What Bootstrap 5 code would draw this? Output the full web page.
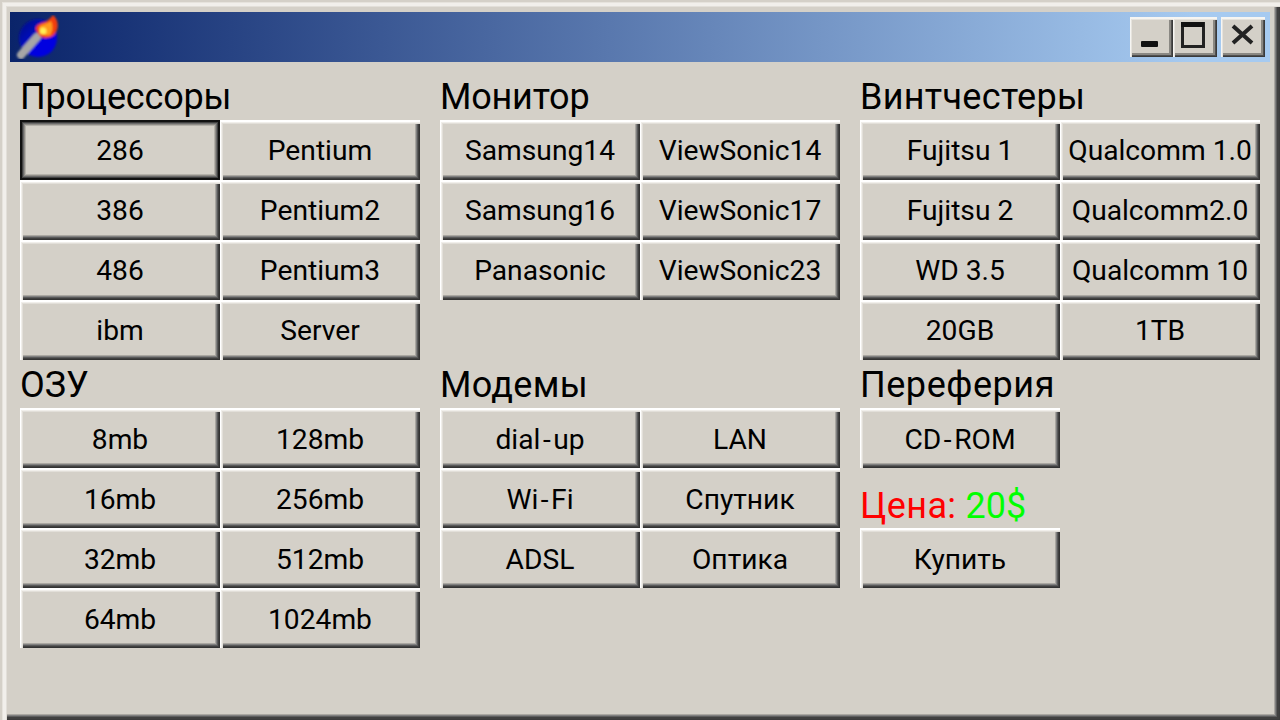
<!DOCTYPE html>
<html lang="ru">
<head>
<meta charset="utf-8">
<title>Конфигуратор</title>
<link href="https://cdn.jsdelivr.net/npm/bootstrap@5.3.0/dist/css/bootstrap.min.css" rel="stylesheet">
<style>
html,body{margin:0;height:100%;overflow:hidden;background:#d4d0c8}
.win{width:1280px;height:720px;background:#d4d0c8;font-family:Roboto,"Liberation Sans",sans-serif;color:#000;
  box-shadow:inset 2px 2px 0 #d4d0c8,inset 3px 3px 0 #e6e3dd,inset 6px 6px 0 #f1efeb,inset 7px 7px 0 #e2dfd9,
    inset -1px -1px 0 #3c3c3c,inset -3px -3px 0 #404040,inset -4px -4px 0 #5e5e5e,inset -5px -5px 0 #808080,inset -6px -6px 0 #aaa7a1;
  padding:12px 10px 0 10px}
.tbar{height:50px;background:linear-gradient(90deg,#0a246a,#a6caf0 94%);padding:0 5px 0 5px}
.wbtn{height:40px;background:#d4d0c8;box-shadow:inset 1px 2px 0 #f6f5f2,inset 2px 3px 0 #e6e3dd,inset -1px -1px 0 #3a3a3a,inset -2px -2px 0 #505050,inset -4px -4px 0 #8a8883}
.wbtn.w43{width:43px}.wbtn.w44{width:44px}
.wbtn svg{display:block}
.cols{padding:10px 0 0 10px;gap:20px}
.pane{width:400px}
.ttl{font-size:36px;line-height:50px;height:48px;white-space:nowrap}
.tight{letter-spacing:-.2px}.loose{letter-spacing:.3px}.looser{letter-spacing:.55px}
.keys{grid-template-columns:200px 200px}
.keys3{height:240px}
.key{width:200px;height:60px;padding:2px 0 0;border:0;border-radius:0;background:#d4d0c8;color:#000;font:400 28.2px/1.2 Roboto,"Liberation Sans",sans-serif;white-space:nowrap;
  box-shadow:inset 1px 2px 0 #fff,inset 2px 3px 0 #f1efeb,inset 3px 4px 0 #e2dfd9,
    inset -1px -1px 0 #333,inset -2px -2px 0 #404040,inset -3px -3px 0 #5a5a5a,inset -4px -4px 0 #808080,inset -5px -5px 0 #aaa7a1}
.key:hover{background:#d4d0c8;color:#000}
.key.act{box-shadow:inset 0 0 0 2px #111,inset 0 0 0 3px #404040,inset 0 0 0 4px #6a6a6a,inset 0 0 0 5px #8f8c87,inset 0 0 0 6px #b4b1aa}
.low .key,.key.low{padding-top:4px}
.hy{padding:0 2.500px}
.price{height:60px;line-height:76px;font-size:36px;white-space:nowrap}
.red{color:#f00;letter-spacing:.4px}.lime{color:#0f0}
</style>
</head>
<body>
<div class="win">
  <div class="tbar d-flex align-items-center justify-content-between">
    <svg width="44" height="44" viewBox="0 0 44 44" aria-hidden="true">
      <defs>
        <filter id="b"><feGaussianBlur stdDeviation=".9"/></filter>
        <linearGradient id="d" x1="0" y1="0" x2="1" y2="1"><stop offset=".1" stop-color="#04128c"/><stop offset=".6" stop-color="#0000e0"/></linearGradient>
      </defs>
      <g filter="url(#b)">
        <circle cx="23" cy="23" r="19" fill="url(#d)"/>
        <path d="M6 40 L22 22" stroke="#a6a6a6" stroke-width="8" stroke-linecap="round"/>
        <path d="M21 12 C24 7 31 8 33 5 C35 3 37 2 38 0 C43 4 44 12 41 17 C38 23 31 24 26 22 C23 19 20 15 21 12Z" fill="#f23c10"/>
        <path d="M24 13 C26 8 31 10 36 6 C38 11 38 16 35 20 C31 22 26 19 24 13Z" fill="#ff9a1e"/>
        <circle cx="28" cy="16" r="3.500" fill="#ffee55"/>
      </g>
    </svg>
    <div class="d-flex">
      <div class="wbtn w43"><svg width="43" height="40" viewBox="0 0 43 40"><rect x="11" y="24" width="17" height="6" rx="1" fill="#111"/></svg></div>
      <div class="wbtn w44"><svg width="44" height="40" viewBox="0 0 44 40"><path fill="none" stroke="#222" stroke-width="3" d="M9.500 6.500H30.500V29.500H9.500Z"/><rect x="8" y="5" width="23" height="5" fill="#111"/></svg></div>
      <div class="wbtn w44 ms-1"><svg width="44" height="40" viewBox="0 0 44 40"><path fill="none" stroke="#222" stroke-width="4" d="M12 9 L31 26M31 9L12 26"/></svg></div>
    </div>
  </div>
  <div class="cols d-flex">
    <div class="pane">
      <div class="ttl tight">Процессоры</div>
      <div class="keys keys3 d-grid">
        <button class="btn key act">286</button><button class="btn key">Pentium</button>
        <button class="btn key">386</button><button class="btn key">Pentium2</button>
        <button class="btn key">486</button><button class="btn key">Pentium3</button>
        <button class="btn key">ibm</button><button class="btn key">Server</button>
      </div>
      <div class="ttl">ОЗУ</div>
      <div class="keys low d-grid">
        <button class="btn key">8mb</button><button class="btn key">128mb</button>
        <button class="btn key">16mb</button><button class="btn key">256mb</button>
        <button class="btn key">32mb</button><button class="btn key">512mb</button>
        <button class="btn key">64mb</button><button class="btn key">1024mb</button>
      </div>
    </div>
    <div class="pane">
      <div class="ttl tight">Монитор</div>
      <div class="keys keys3 d-grid align-content-start">
        <button class="btn key">Samsung14</button><button class="btn key">ViewSonic14</button>
        <button class="btn key">Samsung16</button><button class="btn key">ViewSonic17</button>
        <button class="btn key">Panasonic</button><button class="btn key">ViewSonic23</button>
      </div>
      <div class="ttl loose">Модемы</div>
      <div class="keys low d-grid">
        <button class="btn key">dial<span class="hy">-</span>up</button><button class="btn key">LAN</button>
        <button class="btn key">Wi<span class="hy">-</span>Fi</button><button class="btn key">Спутник</button>
        <button class="btn key">ADSL</button><button class="btn key">Оптика</button>
      </div>
    </div>
    <div class="pane">
      <div class="ttl loose">Винтчестеры</div>
      <div class="keys keys3 d-grid">
        <button class="btn key">Fujitsu 1</button><button class="btn key">Qualcomm 1.0</button>
        <button class="btn key">Fujitsu 2</button><button class="btn key">Qualcomm2.0</button>
        <button class="btn key">WD 3.5</button><button class="btn key">Qualcomm 10</button>
        <button class="btn key">20GB</button><button class="btn key">1TB</button>
      </div>
      <div class="ttl looser">Переферия</div>
      <button class="btn key low d-block">CD<span class="hy">-</span>ROM</button>
      <div class="price"><span class="red">Цена:</span> <span class="lime">20$</span></div>
      <button class="btn key low d-block">Купить</button>
    </div>
  </div>
</div>
<script src="https://cdn.jsdelivr.net/npm/bootstrap@5.3.0/dist/js/bootstrap.bundle.min.js"></script>
</body>
</html>
